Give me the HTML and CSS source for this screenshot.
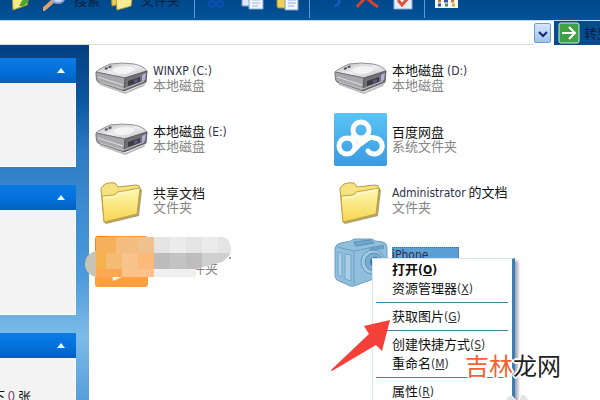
FILE: index.html
```html
<!DOCTYPE html>
<html lang="zh-CN">

<head>
    <meta charset="UTF-8">
    <meta name="viewport" content="width=device-width, initial-scale=1.0">
    <title>我的电脑</title>
    <link rel="stylesheet" href="styles.css">
</head>

<body>

    <!-- shared icons -->
    <svg class="defs" width="0" height="0" aria-hidden="true">
        <defs>
            <linearGradient id="metal" x1="0" y1="0" x2="1" y2="1">
                <stop offset="0" stop-color="#b4b4b8" />
                <stop offset=".5" stop-color="#f1f1f3" />
                <stop offset="1" stop-color="#b9b9bd" />
            </linearGradient>
            <linearGradient id="paper" x1="0" y1="0" x2="0" y2="1">
                <stop offset="0" stop-color="#fff8b4" />
                <stop offset="1" stop-color="#f6d651" />
            </linearGradient>
            <linearGradient id="sky" x1="0" y1="0" x2="0" y2="1">
                <stop offset="0" stop-color="#58c4f4" />
                <stop offset="1" stop-color="#3b9ae2" />
            </linearGradient>
            <symbol id="drive" viewBox="0 0 54 54">
                <path d="M4 32 L30 41 L51 32 L49 35 L30 43 L5 34Z" fill="#bbb" />
                <path d="M1 21 Q2 19 15 13 Q28 11 39 13 Q49 15 52 20 L30 27Z" fill="url(#metal)" stroke="#929296" />
                <path d="M16 19 Q24 13 36 15 Q45 17 37 21 Q31 25 21 23Z" fill="#f4f4f5" stroke="#dcdcde" />
                <path d="M1 21 L30 27 L29 40 L3 31 Q1 30 1 21Z" fill="#a8a8ac" stroke="#747478" />
                <path d="M30 27 L52 20 L51 31 L29 40Z" fill="#707075" stroke="#5c5c61" />
                <path d="M33 30 L45 26 L45 31 L33 35Z" fill="#3c3c42" />
                <path d="M47 24 L51 22 L50 29 L47 30Z" fill="#b5abe0" />
                <path d="M39 29 L43 28 L43 31 L39 32Z" fill="#59598c" />
                <path d="M3 26 L28 34" stroke="#e0e0e2" />
                <path d="M10 18 L17 15" stroke="#555" stroke-width="2" stroke-dasharray="3 1" />
                <path d="M5 31 L29 38 L49 30" fill="none" stroke="#c4c4c7" />
            </symbol>
            <symbol id="folder" viewBox="0 0 54 54">
                <path d="M9 49 L11 51 L44 43 L47 17 L45 15 L42 41Z" fill="#8b7a35" opacity=".7" />
                <path d="M6 16 Q6 14 8 13 L10 11 Q15 9 20 10 L23 14 L41 12 Q45 12 45 16 L42 41 L9 49Z" fill="#f5e382" stroke="#b79c3c" />
                <path d="M7 23 L18 22 Q21 22 22 19 L45 15 L42 41 L9 49Z" fill="url(#paper)" stroke="#c6a63c" />
                <path d="M9 25 L19 24 L24 21 L43 17" fill="none" stroke="#fffce0" />
            </symbol>
            <symbol id="netdisk" viewBox="0 0 54 54">
                <rect x="0" y="1" width="53" height="53" rx="2" fill="url(#sky)" />
                <g fill="none" stroke="#fff" stroke-width="5" stroke-linecap="round">
                    <circle cx="27" cy="18" r="8" />
                    <circle cx="13" cy="34" r="8" />
                    <path d="M19 39 L27 31 Q34 24 41 26 A8 8 0 1 1 34 39" />
                </g>
                <path d="M15 24 L20 22 L27 28 L34 22 L40 25 L28 34Z" fill="#fff" />
            </symbol>
            <symbol id="camera" viewBox="0 0 54 54">
                <path d="M1 14 Q2 10 7 9 L17 7 L20 5 L38 5 L41 7 L49 8 Q53 9 53 14 L53 40 L20 52 Q16 53 12 50 L3 46 Q1 44 1 41Z" fill="#8fbfdd" stroke="#6c9dbf" />
                <path d="M3 13 L20 17 L50 11 M20 17 L20 50" fill="none" stroke="#6c9dbf" />
                <path d="M4 18 L8 19 L8 43 L4 41Z M11 20 L17 21 L17 47 L11 45Z" fill="#a9d0e8" stroke="#76a6c6" />
                <path d="M20 8 L36 6 L40 9 L22 12Z" fill="#71a7c9" stroke="#5c91b5" />
                <path d="M36 13 L50 11 L50 15 L36 17Z" fill="#689fc4" />
                <circle cx="39" cy="28" r="12" fill="#a3cbe4" stroke="#6596b9" />
                <circle cx="40" cy="28" r="9" fill="#78acd0" stroke="#5c8fb3" />
                <circle cx="41" cy="28" r="5" fill="#47799f" />
            </symbol>
            <symbol id="video" viewBox="0 0 54 54">
                <rect x="0" y="2" width="53" height="51" rx="3" fill="#ff9f3f" />
                <path d="M0 8 Q0 2 3 2 L13 2 L16 6 L53 6 V20 H0Z" fill="#e08a22" />
                <path d="M17 41 L29 42 L18 47Z" fill="#fff2df" />
            </symbol>
        </defs>
    </svg>

    <div class="toolbar">
        <div class="group nav">
            <button aria-label="向上">
                <svg width="24" height="24" viewBox="0 0 24 24">
                    <path d="M3 4 L10 2 L21 5 L18 17 L4 22Z" fill="#f7e88a" stroke="#a79332" />
                    <path d="M10 18 L17 6 L21 9 Q19 16 14 18Z" fill="#4aa632" />
                </svg>
            </button>
            <button>
                <svg width="24" height="24" viewBox="0 0 24 24">
                    <path d="M1 21 L10 13" stroke="#e0a06c" stroke-width="4" stroke-linecap="round" />
                    <circle cx="15" cy="8" r="7" fill="#c9dcf6" stroke="#8ba6d5" stroke-width="2" />
                </svg>
                <span>搜索</span>
            </button>
            <button>
                <svg width="24" height="24" viewBox="0 0 24 24">
                    <path d="M1 3 L9 1 L12 4 L18 4 L17 14 L2 18Z" fill="#e8cf55" stroke="#a79332" />
                    <path d="M6 9 L23 5 L21 18 L7 22Z" fill="#f9eb94" stroke="#b39e3c" />
                </svg>
                <span>文件夹</span>
            </button>
        </div>
        <div class="group">
            <button aria-label="剪切">
                <svg width="24" height="24" viewBox="0 0 24 24" fill="none" stroke="#0a4fb4" stroke-width="2">
                    <path d="M7 1 L15 13 M17 1 L9 13" />
                    <circle cx="8" cy="16" r="3" />
                    <circle cx="16" cy="16" r="3" />
                </svg>
            </button>
            <button aria-label="复制">
                <svg width="24" height="24" viewBox="0 0 24 24">
                    <path d="M2 1 H14 V18 H2Z" fill="#dce9fa" stroke="#7896c7" />
                    <path d="M9 4 H23 V21 H9Z" fill="#f1f6fe" stroke="#88a6d4" />
                    <path d="M12 9 H20 M12 12 H20 M12 15 H20 M12 18 H18" stroke="#9bb7df" />
                </svg>
            </button>
            <button aria-label="粘贴">
                <svg width="24" height="24" viewBox="0 0 24 24">
                    <rect x="1" y="1" width="18" height="19" rx="2" fill="#f0d152" stroke="#a98f2f" />
                    <path d="M9 5 H22 V22 H9Z" fill="#f1f6fe" stroke="#7f9dcb" />
                    <path d="M12 9 H20 M12 12 H20 M12 15 H20 M12 18 H18" stroke="#8eaedd" />
                </svg>
            </button>
        </div>
        <div class="group">
            <button aria-label="撤消">
                <svg width="24" height="24" viewBox="0 0 24 24" fill="none" stroke="#1459bb" stroke-width="3">
                    <path d="M3 12 Q15 4 20 12 Q21 17 15 18" />
                </svg>
            </button>
            <button aria-label="删除">
                <svg width="24" height="24" viewBox="0 0 24 24" fill="none" stroke="#d2432c" stroke-width="3">
                    <path d="M3 1 Q11 11 23 19 M22 1 Q11 8 2 19" />
                </svg>
            </button>
            <button aria-label="属性">
                <svg width="24" height="24" viewBox="0 0 24 24">
                    <path d="M3 1 H21 V21 H3Z" fill="#e6edfa" stroke="#8ca8d8" />
                    <path d="M7 12 L11 17 L18 9" fill="none" stroke="#e0503a" stroke-width="3" />
                </svg>
            </button>
        </div>
        <div class="group">
            <button aria-label="查看">
                <svg width="24" height="24" viewBox="0 0 24 24">
                    <rect x="1" y="1" width="23" height="19" fill="#f4f6f4" />
                    <path d="M4 13 H7 M17 13 H20" stroke="#c9783b" stroke-width="3" />
                    <path d="M10 13 H14 M4 17 H7" stroke="#34549f" stroke-width="3" />
                    <path d="M11 17 H14" stroke="#4b8d4c" stroke-width="3" />
                    <path d="M18 17 H21" stroke="#d7b33a" stroke-width="3" />
                </svg>
            </button>
        </div>
    </div>

    <div class="address-bar">
        <input type="text" aria-label="地址">
        <button class="drop" aria-label="展开地址">
            <svg width="10" height="8" viewBox="0 0 10 8">
                <path d="M1 2 L5 6 L9 2" fill="none" stroke="#10297c" stroke-width="2" />
            </svg>
        </button>
        <button class="go">
            <svg width="22" height="22" viewBox="0 0 22 22">
                <rect x="1" y="1" width="20" height="20" rx="2" fill="#3fa044" stroke="#d4ecd2" />
                <path d="M4 11 H17 M11 5 L17 11 L11 17" fill="none" stroke="#fff" stroke-width="2" />
            </svg>
            <span>转到</span>
        </button>
    </div>

    <div class="main">
        <div class="sidebar">
            <div class="panel">
                <button class="panel-head" aria-label="系统任务"><i class="arrow-up"></i></button>
                <div class="panel-body"></div>
            </div>
            <div class="panel tall">
                <button class="panel-head" aria-label="其它位置"><i class="arrow-up"></i></button>
                <div class="panel-body"></div>
            </div>
            <div class="panel details">
                <button class="panel-head" aria-label="详细信息"><i class="arrow-up"></i></button>
                <div class="panel-body"><span>下 <em>0</em> 张</span></div>
            </div>
        </div>

        <div class="content">
            <div class="item">
                <svg class="icon"><use href="#drive" /></svg>
                <div class="label">
                    <p class="name"><span class="latin">WINXP (C:)</span></p>
                    <p class="type">本地磁盘</p>
                </div>
            </div>
            <div class="item">
                <svg class="icon"><use href="#drive" /></svg>
                <div class="label">
                    <p class="name">本地磁盘 <span class="latin">(D:)</span></p>
                    <p class="type">本地磁盘</p>
                </div>
            </div>
            <div class="item">
                <svg class="icon"><use href="#drive" /></svg>
                <div class="label">
                    <p class="name">本地磁盘 <span class="latin">(E:)</span></p>
                    <p class="type">本地磁盘</p>
                </div>
            </div>
            <div class="item">
                <svg class="icon"><use href="#netdisk" /></svg>
                <div class="label">
                    <p class="name">百度网盘</p>
                    <p class="type">系统文件夹</p>
                </div>
            </div>
            <div class="item">
                <svg class="icon"><use href="#folder" /></svg>
                <div class="label">
                    <p class="name">共享文档</p>
                    <p class="type">文件夹</p>
                </div>
            </div>
            <div class="item">
                <svg class="icon"><use href="#folder" /></svg>
                <div class="label">
                    <p class="name"><span class="latin">Administrator</span> 的文档</p>
                    <p class="type">文件夹</p>
                </div>
            </div>
            <div class="item">
                <svg class="icon"><use href="#video" /></svg>
                <div class="label">
                    <p class="name">&nbsp;</p>
                    <p class="type">系统文件夹</p>
                </div>
                <!-- mosaic over the name -->
                <svg class="mosaic" width="150" height="44" viewBox="0 0 150 44">
                    <clipPath id="brush">
                        <path d="M12 2 H138 Q147 3 147 16 Q146 22 138 27 L112 34 V42 H12Z" />
                    </clipPath>
                    <circle cx="14" cy="29" r="13" fill="#c9c4b2" />
                    <g clip-path="url(#brush)">
                        <path d="M12 2 H32 V18 H12Z" fill="#f6b05c" />
                        <path d="M32 2 H54 V18 H32Z" fill="#f3bd80" />
                        <path d="M54 2 H70 V18 H54Z" fill="#efc18f" />
                        <path d="M12 18 H22 V34 H12Z" fill="#f3b14f" />
                        <path d="M22 18 H38 V34 H22Z" fill="#f4bb72" />
                        <path d="M38 18 H54 V34 H38Z" fill="#f8c48c" />
                        <path d="M54 18 H70 V34 H54Z" fill="#fbb97a" />
                        <path d="M12 34 H38 V42 H12Z" fill="#fca754" />
                        <path d="M38 34 H70 V42 H38Z" fill="#fdc28a" />
                        <path d="M70 2 H150 V18 H70Z" fill="#e4e4e4" />
                        <path d="M86 2 H102 V18 H86Z M118 2 H134 V18 H118Z" fill="#ebebeb" />
                        <path d="M70 18 H86 V34 H70Z" fill="#bcbcbc" />
                        <path d="M86 18 H102 V34 H86Z" fill="#c3c3c3" />
                        <path d="M102 18 H118 V34 H102Z" fill="#bdbdbd" />
                        <path d="M118 18 H150 V34 H118Z" fill="#cfcfcf" />
                        <path d="M70 34 H118 V42 H70Z" fill="#efefef" />
                    </g>
                    <path d="M146 22 V24" stroke="#333" />
                </svg>
            </div>
            <div class="item selected">
                <svg class="icon"><use href="#camera" /></svg>
                <div class="label">
                    <p class="name"><span class="latin">iPhone</span></p>
                </div>

                <div class="menu" role="menu">
                    <button class="default" role="menuitem">打开<span class="latin">(<u>O</u>)</span></button>
                    <button role="menuitem">资源管理器<span class="latin">(<u>X</u>)</span></button>
                    <hr>
                    <button role="menuitem">获取图片<span class="latin">(<u>G</u>)</span></button>
                    <hr>
                    <button role="menuitem">创建快捷方式<span class="latin">(<u>S</u>)</span></button>
                    <button role="menuitem">重命名<span class="latin">(<u>M</u>)</span></button>
                    <hr>
                    <button role="menuitem">属性<span class="latin">(<u>R</u>)</span></button>
                </div>

                <svg class="pointer" width="60" height="54" viewBox="0 0 60 54">
                    <path d="M59 1 L33 7 L38 15 L0 51 L1 52 L45 26 L51 32Z" fill="#f5403a" />
                </svg>
            </div>

            <svg class="paw" width="28" height="14" viewBox="0 0 28 14">
                <path d="M0 14 Q2 2 8 4 L14 11 L17 2 Q24 2 27 14Z" fill="#e4e4e6" stroke="#fff" />
            </svg>
            <div class="watermark"><b>吉林</b>龙网</div>
        </div>
    </div>

</body>

</html>
```
FILE: styles.css
```css
* {
    margin: 0;
    padding: 0;
    box-sizing: border-box;
}

body {
    font-family: "Noto Sans CJK SC", sans-serif;
    font-size: 13px;
    line-height: 14px;
    color: #111;
    background-color: #fff;
    display: flex;
    flex-direction: column;
    height: 100vh;
    overflow: hidden;
}

button {
    font: inherit;
    color: inherit;
    background: none;
    border: none;
    cursor: pointer;
}

.defs {
    position: absolute;
}

.latin {
    font-family: "DejaVu Sans Condensed", "DejaVu Sans", sans-serif;
    font-size: 12px;
}

/* toolbar */
.toolbar {
    display: flex;
    align-items: flex-end;
    flex-shrink: 0;
    height: 21px;
    background: linear-gradient(#00488a, #04529a);
    border-bottom: 1px solid #c3d8f2;
    overflow: hidden;
}

.group {
    display: flex;
    gap: 12px;
    height: 30px;
    padding: 0 9px;
    margin-bottom: 2px;
    border-left: 1px solid #5d9bd8;
}

.group button {
    display: flex;
    align-items: center;
    gap: 7px;
    height: 24px;
    color: #06203f;
}

.group.nav {
    gap: 10px;
    padding-right: 14px;
    border-left: none;
}

/* address bar */
.address-bar {
    display: flex;
    flex-shrink: 0;
    height: 24px;
    background-color: #fff;
}

.address-bar input {
    flex: 1;
    min-width: 0;
    border: none;
    border-bottom: 1px solid #ddd;
    outline: none;
    font: inherit;
}

.drop {
    width: 17px;
    height: 20px;
    margin: 2px 3px 2px 1px;
    background: linear-gradient(#d5e5fc, #9fc4ef);
    border: 1px solid #6c9cd2;
    border-radius: 2px;
}

.go {
    display: flex;
    align-items: center;
    gap: 4px;
    width: 46px;
    padding-left: 4px;
    background-color: #064c8f;
    color: #06203f;
    white-space: nowrap;
    overflow: hidden;
}

.go svg {
    flex-shrink: 0;
}

.main {
    display: flex;
    flex: 1;
    min-height: 0;
}

/* task panels */
.sidebar {
    display: flex;
    flex-direction: column;
    gap: 18px;
    width: 89px;
    padding: 13px 13px 0 0;
    background: linear-gradient(#043f80, #0b55a0 15%, #2b7cc4 30%, #3c8ad0 45%, #4c9adb 65%, #7cbbe8 82%, #559fdb);
    overflow: hidden;
}

.panel-head {
    display: flex;
    align-items: center;
    justify-content: flex-end;
    width: 100%;
    height: 25px;
    padding-right: 11px;
    background: linear-gradient(#0a7be6, #0471dc 50%, #0260bd);
}

.arrow-up {
    border: 4px solid transparent;
    border-top: none;
    border-bottom: 5px solid #e9fbff;
}

.panel-body {
    display: flex;
    justify-content: flex-end;
    height: 84px;
    background-color: #f3f3f4;
    border-right: 1px solid #fff;
    border-bottom: 1px solid #fff;
}

.tall .panel-body {
    height: 105px;
}

.details .panel-body {
    padding: 31px 44px 0 0;
    white-space: nowrap;
    overflow: hidden;
}

.details em {
    font-style: normal;
    color: #7a4c72;
}

/* files */
.content {
    position: relative;
    flex: 1;
    display: grid;
    grid-template-columns: 239px 1fr;
    grid-auto-rows: 61px;
    padding: 2px 0 0 6px;
}

.item {
    position: relative;
    display: flex;
    align-items: center;
    gap: 4px;
}

.icon {
    width: 54px;
    height: 54px;
    flex-shrink: 0;
}

.label {
    min-height: 28px;
}

.type {
    color: #858585;
}

.name .latin {
    color: #30304a;
}

.selected .name {
    width: 67px;
    background-color: #5c9fd4;
    outline: 1px dotted #3c6f9c;
    outline-offset: -1px;
}

.mosaic {
    position: absolute;
    left: -11px;
    top: 5px;
}

/* context menu */
.menu {
    position: absolute;
    left: 38px;
    top: 28px;
    width: 143px;
    padding: 1px 4px 4px 3px;
    background-color: #fff;
    border: 1px solid #d9e6ee;
    border-right: 3px solid #3c7faa;
    box-shadow: 3px 3px 3px rgba(80, 70, 110, 0.5);
}

.menu button {
    display: block;
    width: 100%;
    height: 19px;
    padding-left: 16px;
    text-align: left;
    white-space: nowrap;
}

.menu .default {
    font-weight: bold;
}

.menu .latin {
    color: #333;
}

.menu .default .latin {
    color: #111;
}

.menu hr {
    border: none;
    border-top: 1px solid #3f84a8;
    margin: 4px 0;
}

.pointer {
    position: absolute;
    left: -3px;
    top: 89px;
}

.paw {
    position: absolute;
    left: 415px;
    bottom: -6px;
}

.watermark {
    position: absolute;
    left: 376px;
    top: 308px;
    font-size: 24px;
    line-height: 24px;
    color: #222;
    text-shadow: 1px 1px #fff, -1px -1px #fff, 1px -1px #fff, -1px 1px #fff, 2px 0 #fff, -2px 0 #fff, 0 2px #fff, 0 -2px #fff;
}

.watermark b {
    font-weight: normal;
    color: #f4622f;
}
```
